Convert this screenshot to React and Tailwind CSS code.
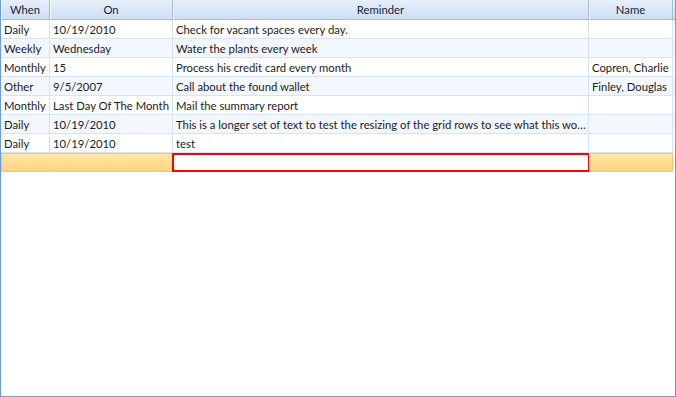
const rows = [
  { when: 'Daily', on: '10/19/2010', text: 'Check for vacant spaces every day.', name: '' },
  { when: 'Weekly', on: 'Wednesday', text: 'Water the plants every week', name: '' },
  { when: 'Monthly', on: '15', text: 'Process his credit card every month', name: 'Copren, Charlie' },
  { when: 'Other', on: '9/5/2007', text: 'Call about the found wallet', name: 'Finley, Douglas' },
  { when: 'Monthly', on: 'Last Day Of The Month', text: 'Mail the summary report', name: '' },
  { when: 'Daily', on: '10/19/2010', text: 'This is a longer set of text to test the resizing of the grid rows to see what this would look like', name: '' },
  { when: 'Daily', on: '10/19/2010', text: 'test', name: '' },
]

const cols = 'grid grid-cols-[49px_123px_416px_84px]'
const cell = 'h-[19px] border-r border-b border-[#d5e3f5] pl-[3px] pr-[2px] leading-[19px] whitespace-nowrap overflow-hidden text-ellipsis'

export default function App() {
  return (
    <div className="w-[676px] h-[397px] bg-white border-l border-r border-b border-[#6e9bd6] text-[11.3px] text-[#1b1b1b] flex flex-col" style={{ fontFamily: "Lato, 'Open Sans', sans-serif" }}>
      {/* Header */}
      <div className={`${cols} h-[20px] bg-gradient-to-b from-[#e6effb] to-[#cddff6] border-b border-[#9ebbe2]`}>
        {['When', 'On', 'Reminder', 'Name'].map((h) => (
          <div key={h} className="border-r border-[#9ebbe2] shadow-[inset_1px_0_0_#f4f8fe] text-center leading-[20px] text-[#15243b]">
            {h}
          </div>
        ))}
      </div>

      {/* Data rows */}
      {rows.map((r, i) => (
        <div key={i} className={`${cols} ${i % 2 ? 'bg-[#f3f8fe]' : 'bg-white'}`}>
          <div className={cell}>{r.when}</div>
          <div className={cell}>{r.on}</div>
          <div className={cell}>{r.text}</div>
          <div className={cell}>{r.name}</div>
        </div>
      ))}

      {/* New row */}
      <div className={`${cols} h-[19px]`}>
        <div className="border border-r-0 border-[#f6c66f] bg-gradient-to-b from-[#ffe7a8] to-[#ffd57e]" />
        <div className="border border-l-[#f2e0b8] border-[#f6c66f] bg-gradient-to-b from-[#ffe7a8] to-[#ffd57e] -ml-px" />
        <div className="border-2 border-[#f00] bg-white -ml-px -mr-px" />
        <div className="border border-l-0 border-[#f6c66f] bg-gradient-to-b from-[#ffe7a8] to-[#ffd57e]" />
      </div>

      <div className="flex-1" />
    </div>
  )
}
